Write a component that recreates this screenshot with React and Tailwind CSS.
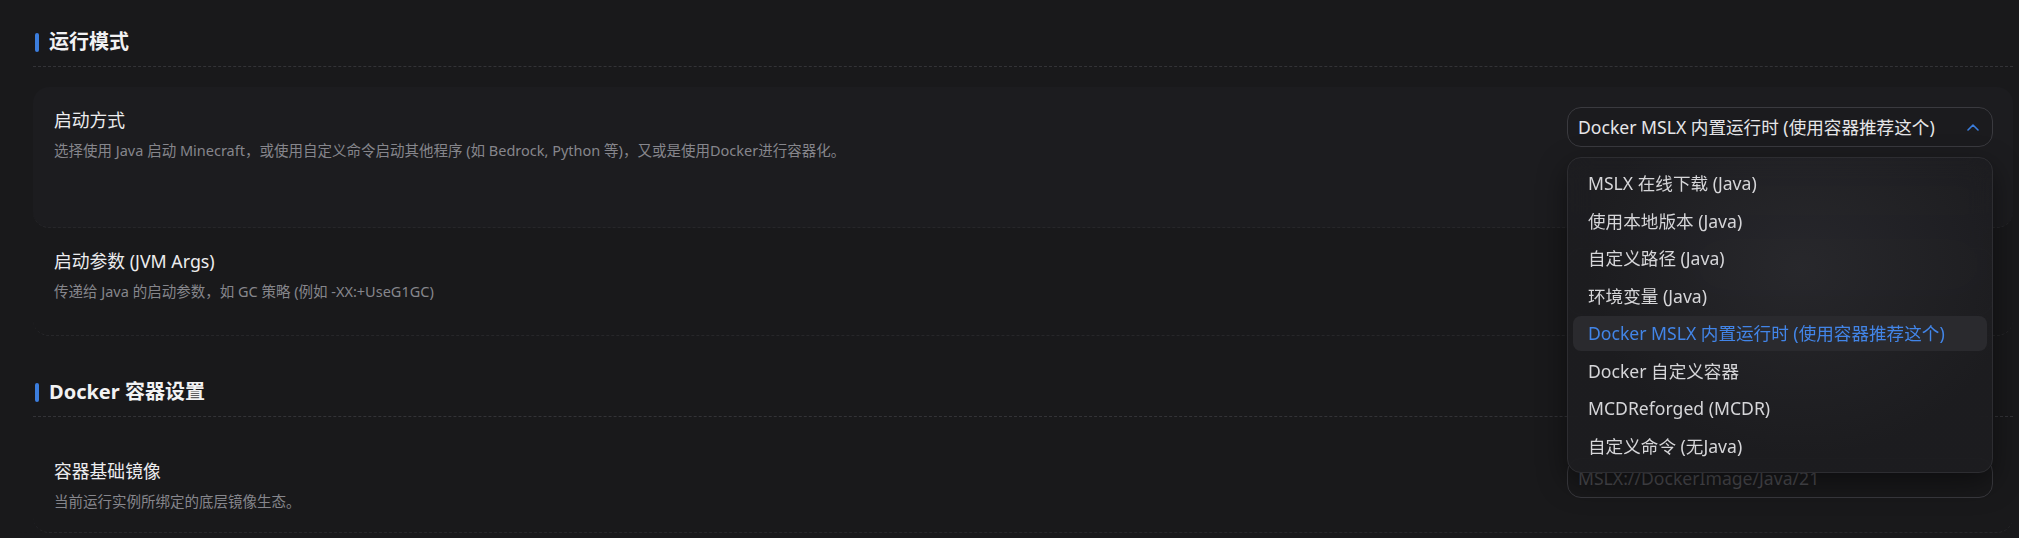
import React from "react";

const items = [
  "MSLX 在线下载 (Java)",
  "使用本地版本 (Java)",
  "自定义路径 (Java)",
  "环境变量 (Java)",
  "Docker MSLX 内置运行时 (使用容器推荐这个)",
  "Docker 自定义容器",
  "MCDReforged (MCDR)",
  "自定义命令 (无Java)",
];

function Heading({ children, top }) {
  return (
    <div className={`${top} pb-[10px] border-b border-dashed border-[#333337]`}>
      <div className="flex items-center h-[28px] gap-[10px] pl-[2px]">
        <span className="w-[4px] h-[19px] rounded-full bg-[#3b7ddd]" />
        <span className="text-[20px] font-bold text-[#f2f2f3] leading-[28px]">{children}</span>
      </div>
    </div>
  );
}

function Row({ title, desc, children, hover }) {
  return (
    <div
      className={`flex justify-between items-start pl-[21px] pr-[20px] py-[20px] rounded-2xl border-b border-dashed border-[#27272a] ${
        hover ? "bg-[#1c1c1f]" : ""
      }`}
    >
      <div className="flex flex-col">
        <div className="text-[17.8px] leading-[26px] text-[#ececee]">{title}</div>
        <div className="mt-[6px] text-[14.5px] leading-[22px] text-[#86868c]">{desc}</div>
      </div>
      <div className="w-[426px] shrink-0 flex flex-col gap-[20px] relative">{children}</div>
    </div>
  );
}

export default function App() {
  return (
    <div
      className="w-full min-h-screen bg-[#19191b] pl-[33px] pr-[6px] overflow-hidden"
      style={{ fontFamily: "'Noto Sans', 'Noto Sans CJK SC', sans-serif" }}
    >
      <Heading top="pt-[28px]">运行模式</Heading>
      <div className="mt-[20px]">
        <Row
          hover
          title="启动方式"
          desc="选择使用 Java 启动 Minecraft，或使用自定义命令启动其他程序 (如 Bedrock, Python 等)，又或是使用Docker进行容器化。"
        >
          <div className="relative">
            <div className="h-[40px] rounded-[14px] border border-[#3a3a3f] flex items-center justify-between pl-[10px] pr-[13px] bg-[#1b1b1e]">
              <span className="text-[17.6px] text-[#e6e6e8] whitespace-nowrap">
                Docker MSLX 内置运行时 (使用容器推荐这个)
              </span>
              <svg width="12" height="8" viewBox="0 0 12 8" fill="none">
                <path d="M1 7L6 2L11 7" stroke="#3b7ddd" strokeWidth="1.6" strokeLinecap="round" strokeLinejoin="round" />
              </svg>
            </div>
            <div className="absolute left-0 right-0 top-[50px] z-20 rounded-[14px] border border-[#2d2d31] bg-[radial-gradient(ellipse_at_55%_35%,rgba(40,40,44,0.97),rgba(29,29,32,0.97)_65%)] backdrop-blur-md shadow-[0_10px_30px_rgba(0,0,0,0.45)] py-2 px-[5px] flex flex-col gap-[2.5px]">
              {items.map((it, i) => (
                <div
                  key={it}
                  className={`h-[35px] rounded-lg flex items-center px-[15px] text-[17.6px] whitespace-nowrap ${
                    i === 4 ? "bg-[#2a2a2e] text-[#4285e8]" : "text-[#d6d6d9]"
                  }`}
                >
                  {it}
                </div>
              ))}
            </div>
          </div>
          <div className="h-[40px] rounded-[14px] border border-[#3a3a3f]" />
        </Row>
        <Row title="启动参数 (JVM Args)" desc="传递给 Java 的启动参数，如 GC 策略 (例如 -XX:+UseG1GC)">
          <div className="h-[67px] rounded-[14px] border border-[#3a3a3f] flex items-start justify-end pt-[8px] pr-[24px]">
            <span className="w-[260px] h-[18px] rounded-full bg-[#3a3a3e]" />
          </div>
        </Row>
      </div>
      <Heading top="pt-[42px]">Docker 容器设置</Heading>
      <div className="mt-[21px]">
        <Row title="容器基础镜像" desc="当前运行实例所绑定的底层镜像生态。">
          <div className="h-[40px] rounded-[14px] border border-[#3a3a3f] flex items-center px-[10px] text-[17.6px] text-[#4c4c51]">
            MSLX://DockerImage/Java/21
          </div>
        </Row>
      </div>
    </div>
  );
}
